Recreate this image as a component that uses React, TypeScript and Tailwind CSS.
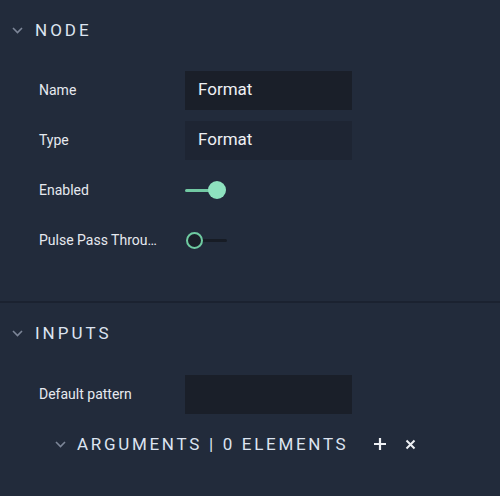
import React from 'react';

const Chevron: React.FC<{ className?: string }> = ({ className }) => (
  <svg width="11" height="7" viewBox="0 0 11 7" className={className}>
    <path d="M1 1 L5.5 5.5 L10 1" fill="none" stroke="#7d8698" strokeWidth="1.6" />
  </svg>
);

const SectionHeader: React.FC<{ title: string }> = ({ title }) => (
  <div className="h-[60px] flex items-center pl-[12px]">
    <Chevron />
    <span className="ml-[12px] text-[17px] tracking-[3px] text-[#dde4f0] leading-none">{title}</span>
  </div>
);

const Row: React.FC<{ label: string; children?: React.ReactNode }> = ({ label, children }) => (
  <div className="h-[50px] flex items-center">
    <div className="w-[185px] shrink-0 pl-[39px] pr-[22px] text-[14px] text-[#e6e9ef] truncate">{label}</div>
    {children}
  </div>
);

const TextBox: React.FC<{ value?: string; dim?: boolean }> = ({ value, dim }) => (
  <div className={`w-[167px] h-[39px] flex items-center pl-[13px] text-[17px] text-[#eef0f4] ${dim ? 'bg-[#1e2533]' : 'bg-[#1a1f29]'}`}>
    {value}
  </div>
);

const Switch: React.FC<{ on: boolean }> = ({ on }) =>
  on ? (
    <div className="relative w-[42px] h-[20px]">
      <div className="absolute left-0 top-[9px] w-[26px] h-[3px] bg-[#72c9a3] rounded" />
      <div className="absolute left-[23px] top-[1px] w-[18px] h-[18px] rounded-full bg-[#8ee2bf]" />
    </div>
  ) : (
    <div className="relative w-[42px] h-[20px]">
      <div className="absolute left-[14px] top-[9px] w-[28px] h-[3px] bg-[#171c25] rounded" />
      <div className="absolute left-[1px] top-[2px] w-[17px] h-[17px] rounded-full border-[2.5px] border-[#6fcba1] bg-[#1a1f29]" />
    </div>
  );

const PlusIcon = () => (
  <svg width="14" height="14" viewBox="0 0 14 14">
    <path d="M7 1 V13 M1 7 H13" stroke="#eef0f4" strokeWidth="2.2" />
  </svg>
);

const XIcon = () => (
  <svg width="11" height="11" viewBox="0 0 11 11">
    <path d="M1.5 1.5 L9.5 9.5 M9.5 1.5 L1.5 9.5" stroke="#eef0f4" strokeWidth="2" />
  </svg>
);

export default function App() {
  return (
    <div className="w-[500px] h-[496px] bg-[#222b3b] font-['Roboto',sans-serif] overflow-hidden">
      <SectionHeader title="NODE" />
      <div className="pt-[5px] pb-[36px]">
        <Row label="Name">
          <TextBox value="Format" />
        </Row>
        <Row label="Type">
          <TextBox value="Format" dim />
        </Row>
        <Row label="Enabled">
          <Switch on />
        </Row>
        <Row label="Pulse Pass Through">
          <Switch on={false} />
        </Row>
      </div>
      <div className="h-[2px] bg-[#1b2230]" />
      <SectionHeader title="INPUTS" />
      <div className="pt-[6px]">
        <Row label="Default pattern">
          <TextBox />
        </Row>
        <div className="h-[50px] flex items-center pl-[55px]">
          <Chevron />
          <span className="ml-[11px] text-[17px] tracking-[2.7px] text-[#dde4f0] leading-none">
            ARGUMENTS | 0 ELEMENTS
          </span>
          <span className="ml-[25px] flex items-center">
            <PlusIcon />
          </span>
          <span className="ml-[18px] flex items-center">
            <XIcon />
          </span>
        </div>
      </div>
    </div>
  );
}
